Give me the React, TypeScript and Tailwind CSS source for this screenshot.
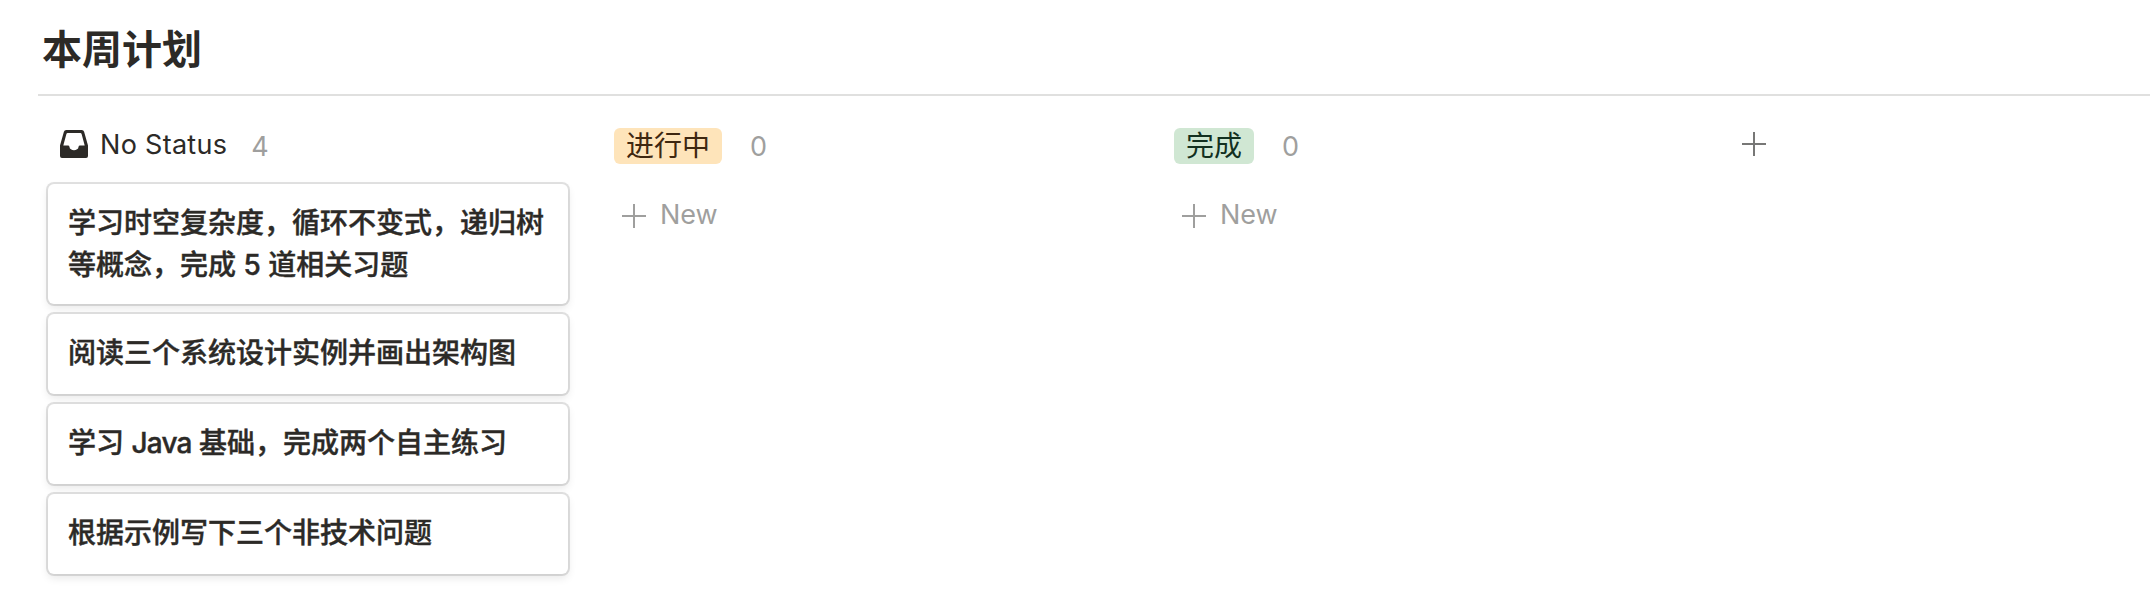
import type { ReactNode } from "react";

const plans: { id: string; text: ReactNode }[] = [
  { id: "complexity", text: "学习时空复杂度，循环不变式，递归树等概念，完成 5 道相关习题" },
  { id: "design", text: "阅读三个系统设计实例并画出架构图" },
  { id: "java", text: <>学习 <span className="tracking-[-0.8px]">Java</span> 基础，完成两个自主练习</> },
  { id: "questions", text: "根据示例写下三个非技术问题" },
];

function Plus({ className }: { className: string }) {
  return (
    <svg viewBox="0 0 24 24" className={className} fill="none" stroke="currentColor" strokeWidth="2">
      <path d="M12 0v24M0 12h24" />
    </svg>
  );
}

function Column({ name, tint }: { name: string; tint: string }) {
  return (
    <section className="w-[560px] shrink-0">
      <header className="flex h-9 items-center">
        <span className={`flex h-9 items-center rounded-[6px] px-3 text-[28px] ${tint}`}>{name}</span>
        <span className="ml-7 pt-0.5 text-[27px] text-[#9f9f9e]">0</span>
      </header>
      <button className="mt-[33px] flex h-9 items-center pl-2 text-[27px] text-[#9f9f9e]">
        <Plus className="mt-0.5 mr-[14px] size-6" />
        New
      </button>
    </section>
  );
}

export default function App() {
  return (
    <main className="h-[598px] w-full overflow-hidden bg-white pl-[38px] font-['Inter','Noto_Sans_CJK_SC',sans-serif] text-[#2c2a27]">
      <h1 className="flex h-24 items-center border-b-2 border-[#e0e0df] pt-[6px] pl-1 text-[40px] font-bold">本周计划</h1>
      <div className="flex pt-[30px]">
        <section className="mr-[44px] w-[532px] shrink-0 pl-[10px]">
          <header className="flex h-9 items-center pl-3">
            <svg viewBox="0 0 28 28" className="mr-[12px] size-7" fill="currentColor">
              <path fillRule="evenodd" d="M6.2 0h15.6q1.8 0 2.3 1.7L28 15.5V26q0 2-2 2H2q-2 0-2-2V15.5L3.9 1.7Q4.4 0 6.2 0ZM7.6 3q-.9 0-1.2 1L3.3 15.6h4.6q1.5 0 1.6 1.4c.2 4.2 8.8 4.2 9 0q.1-1.4 1.6-1.4h4.6L21.6 4q-.3-1-1.2-1Z" />
            </svg>
            <span className="pt-0.5 text-[27px] tracking-[0.3px]">No Status</span>
            <span className="ml-6 pt-1.5 text-[27px] text-[#9f9f9e]">4</span>
          </header>
          <ul className="mt-[22px] flex w-[520px] flex-col gap-[10px]">
            {plans.map(({ id, text }) => (
              <li key={id} className="min-h-20 rounded-[6px] bg-white px-5 py-[18px] text-[28px] leading-[42px] font-medium [-webkit-text-stroke:0.4px_#2c2a27] shadow-[0_0_0_2px_rgba(15,15,15,0.12),0_4px_8px_rgba(15,15,15,0.1)]">{text}</li>
            ))}
          </ul>
        </section>
        <div className="flex pt-0.5">
          <Column name="进行中" tint="bg-[#fee4ba] text-[#3e2710]" />
          <Column name="完成" tint="bg-[#d0e7d3] text-[#12301f]" />
          <Plus className="mt-1 ml-2 size-6 text-[#777776]" />
        </div>
      </div>
    </main>
  );
}
